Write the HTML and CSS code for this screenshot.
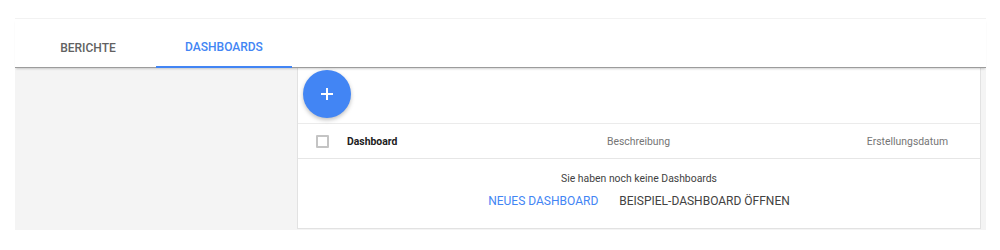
FILE: index.html
```html
<!DOCTYPE html>
<html lang="de">
<head>
<meta charset="utf-8">
<title>Dashboards</title>
<link rel="stylesheet" href="styles.css">
</head>
<body>
<div class="page">
  <div class="topbar"></div>
  <div class="tabs">
    <div class="tab">BERICHTE</div>
    <div class="tab active">DASHBOARDS</div>
  </div>
  <div class="content">
    <div class="sidebar"></div>
    <div class="card">
      <div class="fabrow">
        <div class="fab">
          <svg width="14" height="14" viewBox="0 0 14 14"><path d="M7 1v12M1 7h12" stroke="#fff" stroke-width="2" fill="none"/></svg>
        </div>
      </div>
      <div class="header">
        <span class="checkbox"></span>
        <span class="col-name">Dashboard</span>
        <span class="col-desc">Beschreibung</span>
        <span class="col-date">Erstellungsdatum</span>
      </div>
      <div class="empty">
        <div class="empty-msg">Sie haben noch keine Dashboards</div>
        <div class="actions">
          <span class="btn primary">NEUES DASHBOARD</span>
          <span class="btn">BEISPIEL-DASHBOARD ÖFFNEN</span>
        </div>
      </div>
    </div>
  </div>
</div>
</body>
</html>
```
FILE: styles.css
```css
html, body {
  margin: 0;
  padding: 0;
  background: #fff;
  font-family: Roboto, "Liberation Sans", sans-serif;
}
.page {
  margin-left: 15px;
  width: 971px;
}
.topbar {
  height: 18px;
  border-bottom: 1px solid #f2f2f2;
}
.tabs {
  display: flex;
  height: 48px;
  padding-left: 5px;
  border-bottom: 1px solid #9c9c9c;
  box-shadow: 0 2px 2px -1px rgba(0,0,0,0.18);
  position: relative;
  z-index: 1;
}
.tab {
  box-sizing: border-box;
  width: 136px;
  height: 48px;
  padding-top: 10px;
  display: flex;
  align-items: center;
  justify-content: center;
  font-size: 12px;
  font-weight: 500;
  color: #616161;
}
.tab.active {
  color: #4285f4;
  border-bottom: 2px solid #4285f4;
  padding-top: 8px;
  margin-bottom: -1px;
  height: 49px;
}
.content {
  display: flex;
  background: #f4f4f4;
  height: 162px;
  padding-right: 5px;
}
.sidebar {
  width: 282px;
  flex: none;
}
.card {
  flex: 1;
  background: #fff;
  border: 1px solid #e2e2e2;
  border-top: none;
  box-sizing: border-box;
  height: 161px;
}
.fabrow {
  height: 53px;
  border-bottom: 1px solid #ebebeb;
}
.fab {
  width: 48px;
  height: 48px;
  border-radius: 50%;
  background: #4285f4;
  margin: 2px 0 0 5px;
  display: flex;
  align-items: center;
  justify-content: center;
  box-shadow: 0 2px 4px rgba(0,0,0,0.25);
}
.header {
  height: 34px;
  border-bottom: 1px solid #e6e6e6;
  display: grid;
  grid-template-columns: 13px 242px auto 1fr;
  column-gap: 18px;
  align-items: center;
  padding: 0 32px 0 18px;
  font-size: 10.4px;
  color: #757575;
}
.checkbox {
  width: 13px;
  height: 13px;
  box-sizing: border-box;
  border: 2px solid #c4c4c4;
  border-radius: 1px;
}
.col-name {
  font-weight: 700;
  color: #212121;
}
.col-date {
  justify-self: end;
}
.empty {
  display: flex;
  flex-direction: column;
  align-items: center;
  padding-top: 13px;
}
.empty-msg {
  font-size: 10.4px;
  color: #424242;
  line-height: 13px;
}
.actions {
  display: flex;
  gap: 21px;
  margin-top: 8px;
}
.btn {
  font-size: 12px;
  line-height: 16px;
  color: #424242;
}
.btn.primary {
  color: #4285f4;
}
```
